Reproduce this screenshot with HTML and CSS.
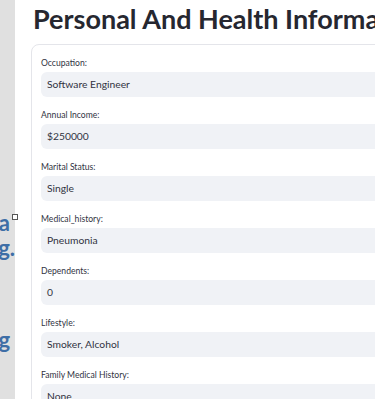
FILE: index.html
```html
<!DOCTYPE html>
<html lang="en">
<head>
    <meta charset="UTF-8">
    <meta name="viewport" content="width=device-width, initial-scale=1.0">
    <title>Personal And Health Information</title>
    <link rel="stylesheet" href="styles.css">
</head>
<body>
    <div class="page">
        <aside class="sidebar">
            <div class="side-group side-top">
                <div class="side-line pad-a">Data</div>
                <div class="side-line">Loading.</div>
            </div>
            <div class="side-group side-bottom">
                <div class="side-line pad-a">Reading</div>
            </div>
        </aside>
        <span class="marker"></span>
        <main class="main">
            <h1>Personal And Health Information</h1>
            <div class="card">
                <div class="field">
                    <label>Occupation:</label>
                    <div class="value">Software Engineer</div>
                </div>
                <div class="field">
                    <label>Annual Income:</label>
                    <div class="value">$250000</div>
                </div>
                <div class="field">
                    <label>Marital Status:</label>
                    <div class="value">Single</div>
                </div>
                <div class="field">
                    <label>Medical_history:</label>
                    <div class="value">Pneumonia</div>
                </div>
                <div class="field">
                    <label>Dependents:</label>
                    <div class="value">0</div>
                </div>
                <div class="field">
                    <label>Lifestyle:</label>
                    <div class="value">Smoker, Alcohol</div>
                </div>
                <div class="field">
                    <label>Family Medical History:</label>
                    <div class="value">None</div>
                </div>
            </div>
        </main>
    </div>
</body>
</html>
```

FILE: styles.css
```css
html, body {
    margin: 0;
    height: 100%;
    overflow: hidden;
    background: #fff;
}
body {
    font-family: Lato, 'Noto Sans', sans-serif;
    color: #31333f;
}
.page {
    position: relative;
    display: flex;
    height: 100%;
}
.sidebar {
    flex: 0 0 15px;
    width: 15px;
    background-color: #e0e0e0;
    overflow: hidden;
    color: #3e6ea6;
    font-weight: 700;
    font-size: 22px;
}
.side-group {
    display: flex;
    flex-direction: column;
}
.side-top {
    margin-top: 210px;
}
.side-bottom {
    margin-top: 67px;
}
.side-line {
    display: flex;
    justify-content: flex-end;
    white-space: nowrap;
    line-height: 25px;
}
.pad-a {
    padding-right: 5px;
}
.marker {
    position: absolute;
    left: 12px;
    top: 214px;
    width: 4px;
    height: 4px;
    border: 1px solid #555;
    background: #fff;
}
.main {
    flex: 0 0 700px;
    padding-left: 16px;
}
h1 {
    margin: 2px 0 8px 2px;
    font-size: 27px;
    line-height: 34px;
    font-weight: 700;
    color: #262730;
    white-space: nowrap;
}
.card {
    border: 1px solid #e4e5ea;
    border-radius: 8px;
    padding: 10px 0 0 9px;
}
.field {
    margin-bottom: 10px;
}
.field label {
    display: block;
    font-size: 8.6px;
    line-height: 16px;
    margin-bottom: 1px;
}
.value {
    background-color: #f0f2f6;
    border-radius: 6px;
    height: 25px;
    line-height: 25px;
    padding-left: 6px;
    font-size: 10.3px;
}
```
